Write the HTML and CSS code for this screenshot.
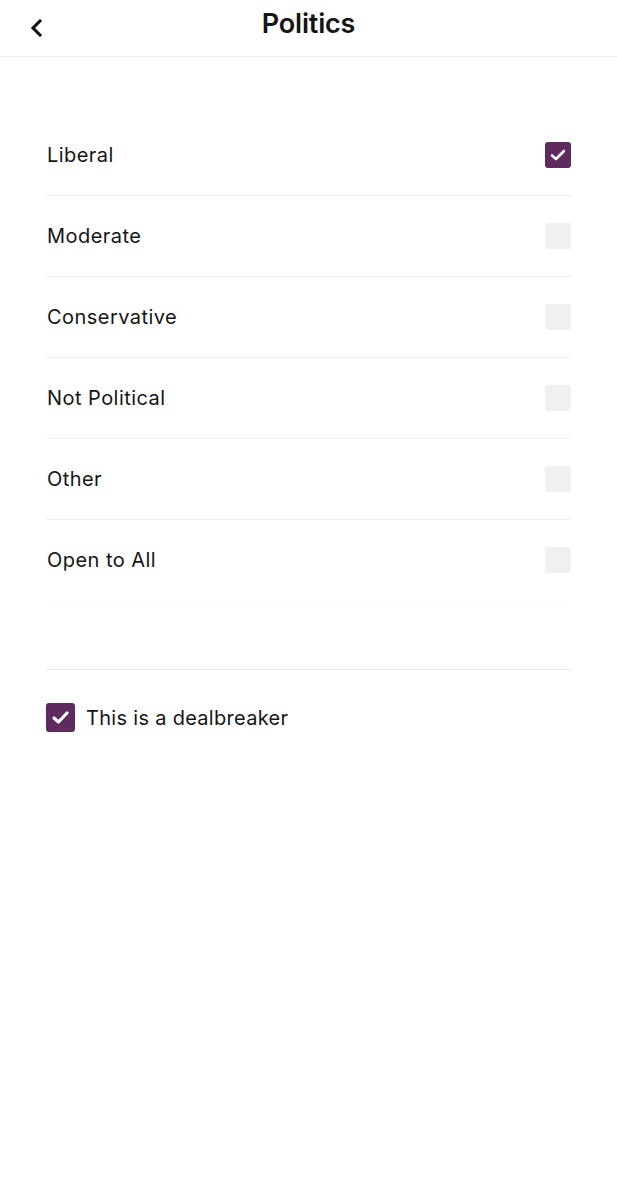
FILE: index.html
```html
<!DOCTYPE html>
<html lang="en">
<head>
<meta charset="utf-8">
<link rel="stylesheet" href="styles.css">
</head>
<body>
<header class="header">
  <button class="back" aria-label="Back">
    <svg width="14" height="18" viewBox="0 0 14 18"><path d="M11 2 L4 9 L11 16" fill="none" stroke="#111" stroke-width="3" stroke-linecap="square"/></svg>
  </button>
  <h1 class="title">Politics</h1>
</header>
<main class="content">
  <ul class="options">
    <li class="option"><span>Liberal</span><span class="box checked"><svg viewBox="0 0 26 26" width="26" height="26"><path d="M7 13.5 L11 17 L19 9" fill="none" stroke="#fff" stroke-width="2.6" stroke-linecap="round" stroke-linejoin="round"/></svg></span></li>
    <li class="option"><span>Moderate</span><span class="box"></span></li>
    <li class="option"><span>Conservative</span><span class="box"></span></li>
    <li class="option"><span>Not Political</span><span class="box"></span></li>
    <li class="option"><span>Other</span><span class="box"></span></li>
    <li class="option last"><span>Open to All</span><span class="box"></span></li>
  </ul>
  <div class="divider"></div>
  <label class="dealbreaker"><span class="box big checked"><svg viewBox="0 0 29 29" width="29" height="29"><path d="M8 15 L12.5 19 L21 10" fill="none" stroke="#fff" stroke-width="3.2" stroke-linecap="round" stroke-linejoin="round"/></svg></span><span>This is a dealbreaker</span></label>
</main>
</body>
</html>
```
FILE: styles.css
```css
* { box-sizing: border-box; }
html, body { margin: 0; padding: 0; background: #fff; }
body { font-family: Inter, "Liberation Sans", sans-serif; color: #151515; width: 617px; }
.header {
  height: 57px;
  border-bottom: 1px solid #ececec;
  display: flex;
  align-items: center;
  justify-content: center;
  position: relative;
}
.back {
  position: absolute;
  left: 26px;
  top: 17px;
  border: 0;
  background: none;
  padding: 0;
  width: 20px;
  height: 22px;
  display: flex;
  align-items: center;
  justify-content: center;
}
.title {
  margin: 0;
  font-size: 27px;
  font-weight: 600;
  letter-spacing: -0.2px;
  margin-top: -10px;
}
.content { padding: 58px 46px 0 46px; }
.options { list-style: none; margin: 0; padding: 0; }
.option {
  height: 81px;
  display: flex;
  align-items: center;
  justify-content: space-between;
  border-bottom: 1px solid #efefef;
  font-size: 20px;
  letter-spacing: 0.45px;
  padding-left: 1px;
}
.option.last { border-bottom: 1px solid #fbfbfb; }
.box {
  width: 26px;
  height: 26px;
  border-radius: 3px;
  background: #f0f0f0;
  display: flex;
  flex-shrink: 0;
}
.box.checked { background: #5f2b5e; }
.divider { height: 1px; background: #e8e8e8; margin-top: 68px; }
.dealbreaker {
  display: flex;
  align-items: center;
  gap: 11px;
  margin-top: 33px;
  font-size: 20px;
  letter-spacing: 0.3px;
}
.box.big { width: 29px; height: 29px; border-radius: 3px; }
```
